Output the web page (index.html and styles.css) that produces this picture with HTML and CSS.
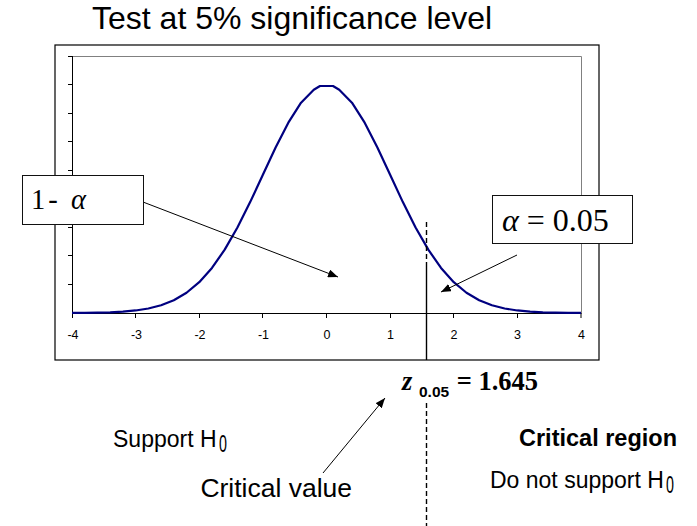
FILE: index.html
```html
<!DOCTYPE html>
<html lang="en">
<head>
<meta charset="utf-8">
<title>Test at 5% significance level</title>
<link rel="stylesheet" href="styles.css">
</head>
<body>
<div class="slide">
  <h1 class="title">Test at 5% significance level</h1>

  <svg class="chart" width="697" height="526" viewBox="0 0 697 526" xmlns="http://www.w3.org/2000/svg">
    <defs>
      <marker id="ah" viewBox="0 0 10 8" refX="10" refY="4" markerWidth="10" markerHeight="8" orient="auto" markerUnits="userSpaceOnUse">
        <path d="M0,0 L10,4 L0,8 z" fill="#000"/>
      </marker>
    </defs>
    <!-- outer chart frame -->
    <rect x="55" y="45" width="544" height="315" fill="none" stroke="#000" stroke-width="1.2"/>
    <!-- plot area border -->
    <path d="M72 56.5 H581.5 V313" fill="none" stroke="#808080" stroke-width="1"/>
    <!-- y axis -->
    <path d="M72.5 56 V313.5" stroke="#000" stroke-width="1"/>
    <path d="M68 56.5 H72 M68 84.5 H72 M68 113.5 H72 M68 141.5 H72 M68 170.5 H72 M68 198.5 H72 M68 227.5 H72 M68 255.5 H72 M68 284.5 H72" stroke="#000" stroke-width="1"/>
    <!-- x axis -->
    <path d="M72 313.5 H581.5" stroke="#000" stroke-width="1"/>
    <path d="M72.5 313 V318 M135.5 313 V318 M199.5 313 V318 M262.5 313 V318 M326.5 313 V318 M390.5 313 V318 M453.5 313 V318 M517.5 313 V318 M581 313 V318" stroke="#000" stroke-width="1"/>
    <g class="ticklabels" text-anchor="middle">
      <text x="73" y="339">-4</text>
      <text x="136.5" y="339">-3</text>
      <text x="200" y="339">-2</text>
      <text x="263.5" y="339">-1</text>
      <text x="327" y="339">0</text>
      <text x="390.5" y="339">1</text>
      <text x="454" y="339">2</text>
      <text x="517.5" y="339">3</text>
      <text x="581.5" y="339">4</text>
    </g>
    <!-- normal curve -->
    <polyline fill="none" stroke="#000080" stroke-width="2.2" stroke-linejoin="round"
      points="72,312.92 84.73,312.83 97.45,312.65 110.18,312.30 122.9,311.64 135.63,310.47 148.35,308.48 161.08,305.24 173.8,300.21 186.53,292.74 199.25,282.17 211.98,267.91 224.7,249.65 237.43,227.49 250.15,202.10 262.88,174.81 275.6,147.56 288.33,122.70 301.05,102.68 313.78,89.68 320,86 333,86 339.23,89.68 351.95,102.68 364.68,122.70 377.4,147.56 390.13,174.81 402.85,202.10 415.58,227.49 428.3,249.65 441.03,267.91 453.75,282.17 466.48,292.74 479.2,300.21 491.93,305.24 504.65,308.48 517.38,310.47 530.1,311.64 542.83,312.30 555.55,312.65 568.28,312.83 581,312.92"/>
    <!-- critical value line -->
    <path d="M426.5 222 V263" stroke="#000" stroke-width="1.4" stroke-dasharray="5 3"/>
    <path d="M426.5 263 V360" stroke="#000" stroke-width="1.4"/>
    <path d="M426.5 403 V526" stroke="#000" stroke-width="1.4" stroke-dasharray="5 3"/>
    <!-- arrows -->
    <line x1="143" y1="202" x2="338" y2="277" stroke="#000" stroke-width="1" marker-end="url(#ah)"/>
    <line x1="517" y1="255" x2="441" y2="292" stroke="#000" stroke-width="1" marker-end="url(#ah)"/>
    <line x1="323" y1="473" x2="385" y2="398" stroke="#000" stroke-width="1" marker-end="url(#ah)"/>
  </svg>

  <div class="callout callout-one-minus"><span class="spaced">1- </span><i class="greek">α</i></div>
  <div class="callout callout-alpha"><i class="greek">α</i>&nbsp;= 0.05</div>

  <div class="label zlabel"><i class="zvar">z</i> <span class="zsub">0.05</span> = 1.645</div>

  <div class="label support">Support H<span class="sub">0</span></div>
  <div class="label critical-value">Critical value</div>
  <div class="label critical-region">Critical region</div>
  <div class="label no-support">Do not support H<span class="sub">0</span></div>
</div>
</body>
</html>
```

FILE: styles.css
```css
html, body {
  margin: 0;
  padding: 0;
  background: #ffffff;
}

.slide {
  position: relative;
  width: 697px;
  height: 526px;
  overflow: hidden;
  background: #ffffff;
  color: #000000;
  font-family: "Liberation Sans", Arial, sans-serif;
}

.title {
  margin: 0;
  padding: 3px 0 0 92px;
  font-size: 32px;
  line-height: 31.5px;
  font-weight: normal;
  white-space: nowrap;
}

.chart {
  position: absolute;
  left: 0;
  top: 0;
  display: block;
}

.ticklabels {
  font-family: "Liberation Sans", Arial, sans-serif;
  font-size: 12.5px;
  fill: #000;
}

.callout {
  position: absolute;
  box-sizing: border-box;
  display: flex;
  align-items: center;
  background: #ffffff;
  border: 1px solid #111;
  font-family: "Liberation Serif", "Times New Roman", serif;
  white-space: pre;
}

.callout-one-minus {
  left: 22px;
  top: 175px;
  width: 122px;
  height: 50px;
  padding-left: 8px;
  font-size: 28.5px;
  line-height: 28px;
}

.spaced {
  letter-spacing: 3px;
}

.callout-alpha {
  left: 492px;
  top: 195px;
  width: 141px;
  height: 49px;
  padding-left: 9px;
  font-size: 32px;
  line-height: 32px;
}

.greek {
  font-style: italic;
}

.label {
  position: absolute;
  line-height: 1;
  white-space: nowrap;
}

.zlabel {
  left: 402px;
  top: 368.2px;
  font-family: "Liberation Serif", "Times New Roman", serif;
  font-weight: bold;
  font-size: 26.5px;
}

.zvar {
  font-style: italic;
}

.zsub {
  font-family: "Liberation Sans", Arial, sans-serif;
  font-size: 15.5px;
  font-weight: bold;
  vertical-align: -6.5px;
  margin-right: 1px;
}

.sub {
  display: inline-block;
  transform: scaleX(0.62);
  transform-origin: left center;
  margin-left: 2px;
  vertical-align: -5.5px;
}

.support {
  left: 113px;
  top: 427.5px;
  font-size: 23px;
}

.critical-value {
  left: 200.4px;
  top: 474.9px;
  font-size: 26.5px;
}

.critical-region {
  left: 519px;
  top: 426.8px;
  font-size: 23.5px;
  font-weight: bold;
}

.no-support {
  left: 490px;
  top: 468.8px;
  font-size: 23px;
}
```
